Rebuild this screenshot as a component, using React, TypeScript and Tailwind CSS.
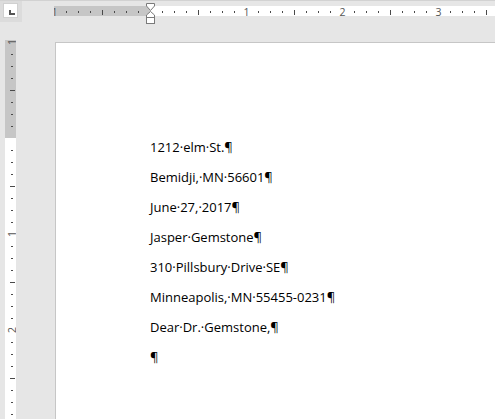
import React from 'react';

const lines = [
  '1212·elm·St.¶',
  'Bemidji,·MN·56601¶',
  'June·27,·2017¶',
  'Jasper·Gemstone¶',
  '310·Pillsbury·Drive·SE¶',
  'Minneapolis,·MN·55455-0231¶',
  'Dear·Dr.·Gemstone,¶',
  '¶',
];

const TICK = '#4a4a4a';
const NUM = '#555555';

// horizontal ruler, margin at x=96 inside the svg, 12px per 1/8 inch
const HRuler: React.FC = () => {
  const m = 96;
  const marks: React.ReactNode[] = [];
  for (let k = -8; k <= 29; k++) {
    const x = m + k * 12;
    if (k === 0) continue;
    if (k % 8 === 0) {
      marks.push(
        <text key={k} x={x + 0.5} y={13.5} textAnchor="middle" fontSize="10.5" fill={NUM} fontFamily="'Open Sans', sans-serif">
          {Math.abs(k / 8)}
        </text>
      );
    } else if (k % 4 === 0) {
      marks.push(<rect key={k} x={x} y={8} width={1} height={5} fill={TICK} />);
    } else {
      marks.push(<rect key={k} x={x} y={9} width={1} height={2} fill={TICK} />);
    }
  }
  return (
    <svg width="441" height="24" className="block">
      <rect x="0" y="4" width={m} height="10" fill="#c6c6c6" />
      <rect x={m} y="4" width={441 - m} height="10" fill="#ffffff" />
      {marks}
      {/* indent markers */}
      <polygon points="92.5,1.5 100.5,1.5 100.5,4 96.5,8.5 92.5,4" fill="#ffffff" stroke="#7a7a7a" strokeWidth="1" />
      <polygon points="96.5,9.5 100.5,13 100.5,15.5 92.5,15.5 92.5,13" fill="#ffffff" stroke="#7a7a7a" strokeWidth="1" />
      <rect x="92.5" y="15.5" width="8" height="6" fill="#ffffff" stroke="#7a7a7a" strokeWidth="1" />
    </svg>
  );
};

// vertical ruler, margin at y=98 inside the svg
const VRuler: React.FC = () => {
  const m = 98;
  const marks: React.ReactNode[] = [];
  for (let k = -8; k <= 24; k++) {
    const y = m + k * 12;
    if (k === 0) continue;
    if (k % 8 === 0) {
      marks.push(
        <text
          key={k}
          x={6.5}
          y={y}
          textAnchor="middle"
          dominantBaseline="central"
          fontSize="10.5"
          fill={NUM}
          fontFamily="'Open Sans', sans-serif"
          transform={`rotate(-90 6.5 ${y})`}
        >
          {Math.abs(k / 8)}
        </text>
      );
    } else if (k % 4 === 0) {
      marks.push(<rect key={k} x={5} y={y} width={5} height={1} fill={TICK} />);
    } else {
      marks.push(<rect key={k} x={6} y={y} width={2} height={1} fill={TICK} />);
    }
  }
  return (
    <svg width="11" height="379" className="block">
      <rect x="0" y="0" width="11" height={m} fill="#c6c6c6" />
      <rect x="0" y={m} width="11" height={379 - m} fill="#ffffff" />
      {marks}
    </svg>
  );
};

export default function App() {
  return (
    <div className="w-[495px] h-[419px] overflow-hidden bg-[#e6e6e6] antialiased">
      <div className="h-px bg-[#d2d2d2]" />
      <div className="flex h-[41px]">
        <div className="w-[22px] h-[21px] bg-[#dcdcdc] pl-[3px] pt-[2px]">
          <div className="w-[15px] h-[15px] bg-white border border-[#d0d0d0]">
            <svg width="13" height="13" className="block">
              <rect x="5" y="6" width="2" height="5" fill="#555555" />
              <rect x="5" y="9" width="6" height="2" fill="#555555" />
            </svg>
          </div>
        </div>
        <div className="ml-[32px] pt-px">
          <HRuler />
        </div>
      </div>
      <div className="flex">
        <div className="w-[55px] pl-[5px] -mt-[2px]">
          <VRuler />
        </div>
        <div className="flex-1 h-[377px] bg-white border-l border-t border-[#c6c6c6] pl-[94px] pt-[89px] font-['Open_Sans',sans-serif] text-[13px] leading-[30px] text-black">
          {lines.map((l, i) => (
            <div key={i} className="whitespace-nowrap">
              {l}
            </div>
          ))}
        </div>
      </div>
    </div>
  );
}
